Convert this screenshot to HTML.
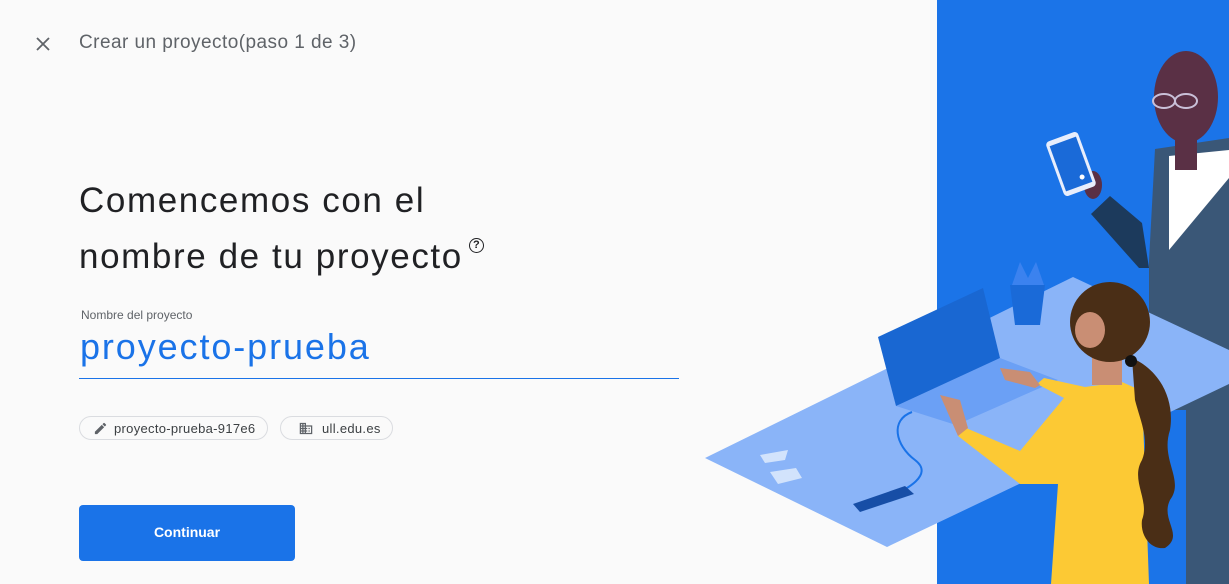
<!DOCTYPE html>
<html><head><meta charset="utf-8"><style>
html,body{margin:0;padding:0;width:1229px;height:584px;overflow:hidden;background:#fafafa;font-family:"Liberation Sans",Arial,sans-serif;}
.top{position:absolute;left:36px;top:37px;}
.title{position:absolute;left:79px;top:32px;font-size:19px;color:#5f6368;letter-spacing:0.45px;}
h1{position:absolute;left:79px;top:173px;margin:0;font-weight:400;font-size:35px;line-height:56px;color:#202124;letter-spacing:1.6px;}
.help{display:inline-block;width:13px;height:13px;border:1.5px solid #202124;border-radius:50%;font-size:11px;line-height:13px;text-align:center;vertical-align:20px;margin-left:6px;font-weight:700;letter-spacing:0;}
.lbl{position:absolute;left:81px;top:308px;font-size:12px;color:#5f6368;}
.inp{position:absolute;left:80px;top:326px;font-size:36px;color:#1a73e8;letter-spacing:1.9px;}
.line{position:absolute;left:79px;top:378px;width:600px;height:1px;background:#1a73e8;}
.chip{position:absolute;top:416px;height:24px;border:1px solid #dadce0;border-radius:13px;font-size:13px;color:#3c4043;line-height:24px;box-sizing:border-box;padding-left:34px;letter-spacing:0.3px;}
.btn{position:absolute;left:79px;top:505px;width:216px;height:56px;background:#1a73e8;border-radius:4px;color:#fff;font-weight:700;font-size:14px;text-align:center;line-height:54px;}
svg.art{position:absolute;left:0;top:0;}
</style></head><body>
<svg class="art" width="1229" height="584">
<rect x="937" y="0" width="292" height="584" fill="#1b74e8"/>
<polygon points="1155,149 1229,138 1229,584 1186,584 1186,410 1149,410 1149,261" fill="#3a5777"/>
<polygon points="1091,214 1110,196 1142,223 1149,268 1139,268" fill="#1c3a5c"/>
<polygon points="1169,156 1229,150 1229,178 1169,250" fill="#fff"/>
<ellipse cx="1186" cy="97" rx="32" ry="46" fill="#5a3045"/>
<rect x="1175" y="130" width="22" height="40" fill="#5a3045"/>
<ellipse cx="1164" cy="101" rx="11" ry="7" fill="none" stroke="#c9c0d8" stroke-width="2"/>
<ellipse cx="1186" cy="101" rx="11" ry="7" fill="none" stroke="#c9c0d8" stroke-width="2"/>
<ellipse cx="1093" cy="185" rx="9" ry="14" fill="#5a3045"/>
<g transform="translate(1071,164) rotate(-20)"><rect x="-17" y="-29" width="34" height="58" rx="4" fill="#e8eefc"/><rect x="-14" y="-24" width="28" height="48" fill="#1a6ad8"/><circle cx="6" cy="16" r="2.5" fill="#fff"/></g>
<polygon points="705,458 887,547 1229,384 1229,350 1073,277" fill="#8ab4f8"/>
<polygon points="1010,285 1045,285 1040,325 1015,325" fill="#1a6ad8"/>
<polygon points="1012,285 1020,262 1028,278 1036,262 1044,285" fill="#3b82ef"/>
<polygon points="896,406 1000,358 1058,380 956,425" fill="#6ba0f5"/>
<polygon points="878,337 983,288 1000,358 896,406" fill="#1967d2"/>
<path d="M912,412 C890,420 895,445 915,460 C935,475 905,490 890,497" fill="none" stroke="#1a73e8" stroke-width="2"/>
<polygon points="853,504 905,486 914,494 860,512" fill="#174ea6"/>
<polygon points="760,455 788,450 785,460 765,463" fill="#d2e3fc"/>
<polygon points="770,472 796,468 802,478 778,484" fill="#d2e3fc"/>
<polygon points="1051,584 1058,484 1020,484 958,436 966,428 1020,451 1064,398 1037,384 1044,378 1085,387 1122,382 1142,391 1149,584" fill="#fcc934"/>
<path d="M1000,368 L1030,372 L1040,385 L1035,388 L1005,380 Z" fill="#c98e74"/>
<path d="M940,395 L960,400 L968,428 L958,436 Z" fill="#c98e74"/>
<rect x="1092" y="355" width="30" height="30" fill="#c98e74"/>
<ellipse cx="1110" cy="322" rx="40" ry="40" fill="#4a2e16"/>
<path d="M1132,358 C1160,370 1175,400 1170,430 C1160,460 1185,480 1170,500 C1160,520 1185,535 1165,548 C1150,550 1140,535 1142,520 C1150,500 1130,480 1142,460 C1150,440 1140,420 1135,400 Z" fill="#4a2e16"/>
<circle cx="1131" cy="361" r="6" fill="#111"/>
<ellipse cx="1090" cy="330" rx="15" ry="18" fill="#c98e74"/>
</svg>
<svg class="top" width="14" height="14"><path d="M1,1L13,13M13,1L1,13" stroke="#5f6368" stroke-width="1.8"/></svg>
<div class="title">Crear un proyecto(paso 1 de 3)</div>
<h1>Comencemos con el<br>nombre de tu proyecto<span class="help">?</span></h1>
<div class="lbl">Nombre del proyecto</div>
<div class="inp">proyecto-prueba</div>
<div class="line"></div>
<div class="chip" style="left:79px;width:189px;"><svg style="position:absolute;left:13px;top:4px" width="15" height="15" viewBox="0 0 24 24"><path d="M3 17.25V21h3.75L17.81 9.94l-3.75-3.75L3 17.25zM20.71 7.04a1 1 0 000-1.41l-2.34-2.34a1 1 0 00-1.41 0l-1.83 1.83 3.75 3.75 1.83-1.83z" fill="#5f6368"/></svg>proyecto-prueba-917e6</div>
<div class="chip" style="left:280px;width:113px;padding-left:41px;"><svg style="position:absolute;left:17px;top:4px" width="16" height="15" viewBox="0 0 24 24"><path d="M12 7V3H2v18h20V7H12zM6 19H4v-2h2v2zm0-4H4v-2h2v2zm0-4H4V9h2v2zm0-4H4V5h2v2zm4 12H8v-2h2v2zm0-4H8v-2h2v2zm0-4H8V9h2v2zm0-4H8V5h2v2zm10 12h-8v-2h2v-2h-2v-2h2v-2h-2V9h8v10zm-2-8h-2v2h2v-2zm0 4h-2v2h2v-2z" fill="#5f6368"/></svg>ull.edu.es</div>
<div class="btn">Continuar</div>
</body></html>
